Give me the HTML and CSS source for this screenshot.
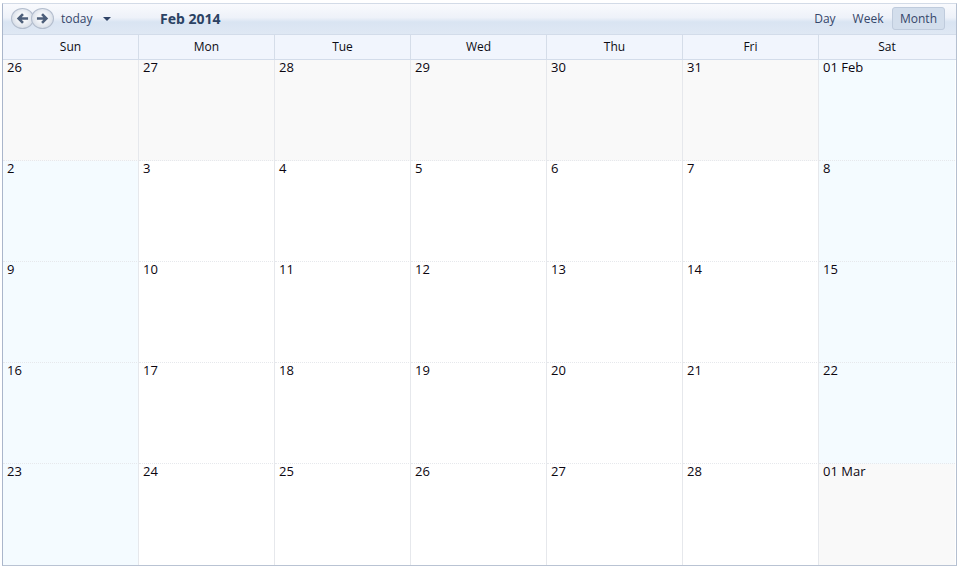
FILE: index.html
```html
<!DOCTYPE html>
<html lang="en">
<head>
<meta charset="utf-8">
<title>Calendar</title>
<link rel="stylesheet" href="styles.css">
</head>
<body>
<div class="calendar">
  <div class="toolbar">
    <div class="nav">
      <span class="round"><svg viewBox="0 0 14 14" width="13" height="13"><path d="M13 7H4M7.500 2.200 2.800 7l4.700 4.800" fill="none" stroke="#4d5f7a" stroke-width="2.800"/></svg></span>
      <span class="round second"><svg viewBox="0 0 14 14" width="13" height="13"><path d="M1 7h9M6.500 2.200 11.200 7l-4.700 4.800" fill="none" stroke="#4d5f7a" stroke-width="2.800"/></svg></span>
    </div>
    <span class="today">today</span>
    <span class="caret"></span>
    <span class="title">Feb 2014</span>
    <div class="views">
      <span class="view">Day</span>
      <span class="view">Week</span>
      <span class="view active">Month</span>
    </div>
  </div>
  <div class="head">
    <div>Sun</div><div>Mon</div><div>Tue</div><div>Wed</div><div>Thu</div><div>Fri</div><div>Sat</div>
  </div>
  <div class="grid">
    <div class="cell other">26</div><div class="cell other">27</div><div class="cell other">28</div><div class="cell other">29</div><div class="cell other">30</div><div class="cell other">31</div><div class="cell weekend">01 Feb</div>
    <div class="cell weekend">2</div><div class="cell">3</div><div class="cell">4</div><div class="cell">5</div><div class="cell">6</div><div class="cell">7</div><div class="cell weekend">8</div>
    <div class="cell weekend">9</div><div class="cell">10</div><div class="cell">11</div><div class="cell">12</div><div class="cell">13</div><div class="cell">14</div><div class="cell weekend">15</div>
    <div class="cell weekend">16</div><div class="cell">17</div><div class="cell">18</div><div class="cell">19</div><div class="cell">20</div><div class="cell">21</div><div class="cell weekend">22</div>
    <div class="cell weekend">23</div><div class="cell">24</div><div class="cell">25</div><div class="cell">26</div><div class="cell">27</div><div class="cell">28</div><div class="cell other">01 Mar</div>
  </div>
</div>
</body>
</html>
```
FILE: styles.css
```css
* { box-sizing: border-box; }
html, body { margin: 0; padding: 0; background: #fff; }
body { font-family: "Open Sans", "Noto Sans", sans-serif; font-size: 12px; color: #0c0c14; overflow: hidden; }
.calendar {
  width: 955px;
  height: 563px;
  margin: 3px 0 0 2px;
  border-left: 1px solid #aab6cb;
  border-right: 1px solid #b4bfd0;
  border-top: 1px solid #d3dbe7;
  border-bottom: 1px solid #b9c3d3;
  display: flex;
  flex-direction: column;
}
.toolbar {
  height: 31px;
  flex: none;
  display: flex;
  align-items: center;
  padding: 0 11px 2px 8px;
  background: linear-gradient(#f9fafd 0, #eef2f9 45%, #d9e4f2 60%, #dfe8f4 100%);
  border-bottom: 1px solid #d3dcea;
}
.nav { display: flex; width: 43px; }
.round {
  width: 23px;
  height: 21px;
  border-radius: 50%;
  border: 1px solid #b3bdcd;
  background: radial-gradient(circle at 50% 45%, #f4f6f9 30%, #ccd4e0 95%);
  display: flex;
  align-items: center;
  justify-content: center;
}
.second { margin-left: -3px; }
.today { margin-left: 7px; color: #35466a; width: 42px; }
.caret {
  width: 0; height: 0;
  margin-top: 1px;
  border-left: 4px solid transparent;
  border-right: 4px solid transparent;
  border-top: 4px solid #2f4366;
}
.title { margin-left: 49px; font-family: "Noto Sans", sans-serif; font-weight: 700; font-size: 14px; color: #2b4263; }
.views { margin-left: auto; display: flex; align-items: center; }
.view { padding: 0 7.500px; height: 23px; line-height: 21px; color: #35466a; border: 1px solid transparent; }
.active { padding: 0 7px; background: #d3deec; border-color: #bfcbdc; border-radius: 3px; }
.head {
  height: 25px;
  flex: none;
  display: grid;
  grid-template-columns: repeat(7, 136px);
  background: #f1f5fd;
  border-bottom: 1px solid #d3dcea;
}
.head div { text-align: center; line-height: 23px; border-right: 1px solid #d5dde9; }
.head div:last-child { border-right: 0; }
.grid {
  flex: 1;
  display: grid;
  grid-template-columns: repeat(7, 136px);
  grid-template-rows: repeat(4, 101px) 1fr;
}
.cell {
  padding: 0 0 0 4px;
  line-height: 14px;
  border-right: 1px solid #e6e8ec;
  border-bottom: 1px dotted #e6e8ec;
  font-size: 13px;
  color: #0c0610;
}
.cell:nth-child(7n) { border-right: 0; }
.cell:nth-last-child(-n+7) { border-bottom: 0; }
.weekend { background: #f4fbff; }
.other { background: #f9f9f9; }
```
